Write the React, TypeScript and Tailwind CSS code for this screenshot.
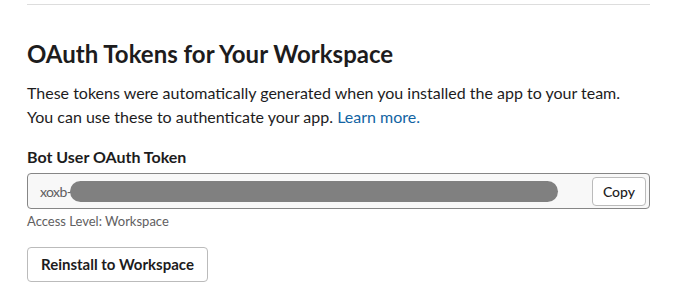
export default function App() {
  return (
    <div className="h-[300px] w-[678px] bg-white px-[27px] font-['Lato','Noto_Sans',sans-serif] text-[#1d1c1d]">
      <div className="border-t border-[#dddddd] pt-[34px] mt-[4px] w-[623px]">
        <h2 className="text-[24px] font-bold leading-[30px]">OAuth Tokens for Your Workspace</h2>
        <p className="mt-[12px] text-[16px] leading-[24px]">
          These tokens were automatically generated when you installed the app to your team.
          <br />
          You can use these to authenticate your app.{' '}
          <a href="#" className="text-[#1264a3]">Learn more.</a>
        </p>

        <div className="mt-[17px]">
          <label className="block text-[16px] font-bold leading-[22px]">Bot User OAuth Token</label>
          <div className="mt-[5px] flex h-[36px] items-center rounded-[4px] border border-[#868686] bg-[#f8f8f8] pl-[12px] pr-[3px]">
            <span className="text-[14px] tracking-[-0.6px] text-[#616061]">xoxb-</span>
            <span className="-ml-[1px] h-[21px] w-[488px] rounded-full bg-[#808080]" />
            <button className="ml-auto h-[29px] rounded-[4px] border border-[#bbbbbb] bg-white px-[10px] text-[14px] font-medium">
              Copy
            </button>
          </div>
          <div className="mt-[3px] text-[13px] leading-[18px] text-[#616061]">Access Level: Workspace</div>
        </div>

        <button className="mt-[17px] h-[35px] rounded-[4px] border border-[#bbbbbb] bg-white px-[13px] text-[15px] font-bold">
          Reinstall to Workspace
        </button>
      </div>
    </div>
  )
}
